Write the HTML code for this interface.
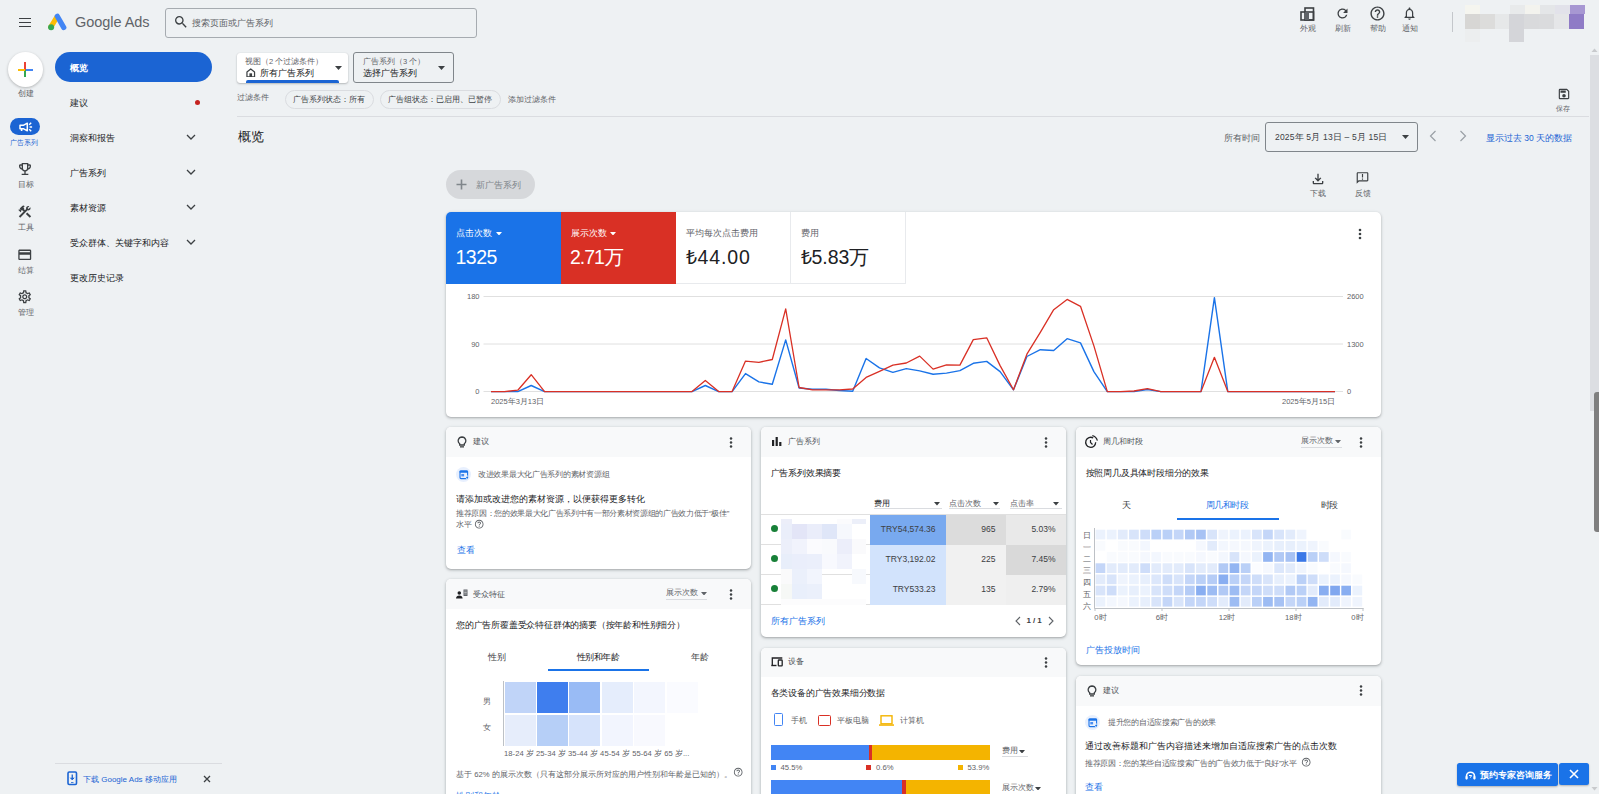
<!DOCTYPE html>
<html><head><meta charset="utf-8">
<style>
*{box-sizing:border-box;margin:0;padding:0}
html,body{width:1599px;height:794px;overflow:hidden}
body{background:#eef1f3;font-family:"Liberation Sans",sans-serif;color:#202124;position:relative}
.a{position:absolute;white-space:nowrap}
.g{color:#5f6368}
svg{display:block}
.card{background:#fff;border-radius:5px;box-shadow:0 1px 2px rgba(60,64,67,.3),0 1px 3px 1px rgba(60,64,67,.12);overflow:hidden}
.hdr{background:#f8f9fa}
.ht{font-size:7.5px;line-height:9px;color:#4d5156}
.tt{font-size:8.9px;line-height:11px;color:#202124;font-weight:500}
.tt2{font-size:9px;letter-spacing:-0.2px;line-height:11px;color:#202124;font-weight:500}
.tab{font-size:8.5px;line-height:10px;color:#3c4043;letter-spacing:-0.4px}
.lk{font-size:8.5px;line-height:10px;color:#1a73e8;font-weight:500}
.num{font-size:8.5px;line-height:11px;color:#3c4043}

</style></head><body>

<!-- ===== HEADER ===== -->
<div class="a" style="left:19px;top:18px;width:12px;height:9px">
 <div style="position:absolute;left:0;top:0;width:12px;height:1.4px;background:#3c4043"></div>
 <div style="position:absolute;left:0;top:3.8px;width:12px;height:1.4px;background:#3c4043"></div>
 <div style="position:absolute;left:0;top:7.6px;width:12px;height:1.4px;background:#3c4043"></div>
</div>
<svg class="a" style="left:47px;top:13px" width="21" height="18" viewBox="0 0 21 18">
 <path d="M3.8 14.2 L9.3 5" stroke="#fbbc04" stroke-width="5.2" stroke-linecap="round"/>
 <path d="M10.3 3.3 L16.8 14.6" stroke="#4285f4" stroke-width="5.2" stroke-linecap="round"/>
 <circle cx="4.1" cy="14.3" r="3" fill="#34a853"/>
</svg>
<div class="a" style="left:75px;top:13.5px;font-size:14.5px;line-height:17px;color:#5f6368;letter-spacing:-0.05px">Google Ads</div>

<div class="a" style="left:165px;top:7.5px;width:312px;height:30px;border:1px solid #a6abb0;border-radius:3px"></div>
<svg class="a" style="left:172.5px;top:13.5px" width="16" height="16" viewBox="0 0 24 24"><path fill="#3c4043" d="M15.5 14h-.79l-.28-.27A6.471 6.471 0 0 0 16 9.5 6.5 6.5 0 1 0 9.5 16c1.61 0 3.09-.59 4.23-1.57l.27.28v.79l5 4.99L20.49 19l-4.99-5zm-6 0C7.01 14 5 11.99 5 9.5S7.01 5 9.5 5 14 7.01 14 9.5 11.99 14 9.5 14z"/></svg>
<div class="a g" style="left:191.5px;top:18px;font-size:9px;line-height:11px">搜索页面或广告系列</div>

<!-- top right icons -->
<svg class="a" style="left:1300px;top:7px" width="15" height="14" viewBox="0 0 15 14"><rect x="1" y="5" width="12.5" height="8" fill="none" stroke="#3c4043" stroke-width="1.6"/><rect x="5" y="1" width="8.5" height="12" fill="none" stroke="#3c4043" stroke-width="1.6"/><rect x="5" y="5" width="4" height="8" fill="#5f6368"/></svg>
<div class="a g" style="left:1300px;top:24px;font-size:7.5px;line-height:9px">外观</div>
<svg class="a" style="left:1335px;top:6px" width="15" height="15" viewBox="0 0 24 24"><path fill="#3c4043" d="M17.65 6.35A7.958 7.958 0 0 0 12 4c-4.42 0-7.99 3.58-7.99 8s3.57 8 7.99 8c3.73 0 6.84-2.55 7.73-6h-2.08A5.99 5.99 0 0 1 12 18c-3.31 0-6-2.69-6-6s2.69-6 6-6c1.66 0 3.14.69 4.22 1.78L13 11h7V4l-2.35 2.35z"/></svg>
<div class="a g" style="left:1335px;top:24px;font-size:7.5px;line-height:9px">刷新</div>
<svg class="a" style="left:1369px;top:5px" width="17" height="17" viewBox="0 0 24 24"><path fill="#3c4043" d="M11 18h2v-2h-2v2zm1-16C6.48 2 2 6.48 2 12s4.48 10 10 10 10-4.48 10-10S17.52 2 12 2zm0 18c-4.41 0-8-3.59-8-8s3.59-8 8-8 8 3.59 8 8-3.59 8-8 8zm0-14c-2.21 0-4 1.79-4 4h2c0-1.1.9-2 2-2s2 .9 2 2c0 2-3 1.75-3 5h2c0-2.25 3-2.5 3-5 0-2.21-1.79-4-4-4z"/></svg>
<div class="a g" style="left:1370px;top:24px;font-size:7.5px;line-height:9px">帮助</div>
<svg class="a" style="left:1402px;top:6px" width="15" height="15" viewBox="0 0 24 24"><path fill="#3c4043" d="M12 22c1.1 0 2-.9 2-2h-4c0 1.1.89 2 2 2zm6-6v-5c0-3.07-1.64-5.64-4.5-6.32V4c0-.83-.67-1.5-1.5-1.5s-1.5.67-1.5 1.5v.68C7.63 5.36 6 7.92 6 11v5l-2 2v1h16v-1l-2-2zm-2 1H8v-6c0-2.48 1.51-4.5 4-4.5s4 2.02 4 4.5v6z"/></svg>
<div class="a g" style="left:1402px;top:24px;font-size:7.5px;line-height:9px">通知</div>
<div class="a" style="left:1452px;top:12px;width:1px;height:20px;background:#c4c7cb"></div>

<!-- pixelated account -->
<div class="a" style="left:1464.8px;top:5px;width:128px;height:37px">
 <div style="position:absolute;left:0;top:0;width:15px;height:9px;background:#f5f5ef"></div>
 <div style="position:absolute;left:45px;top:0;width:15px;height:9px;background:#e8eaeb"></div>
 <div style="position:absolute;left:60px;top:0;width:15px;height:9px;background:#f3f3ee"></div>
 <div style="position:absolute;left:75px;top:0;width:15px;height:9px;background:#e4e6e8"></div>
 <div style="position:absolute;left:90px;top:0;width:15px;height:9px;background:#e2e2ea"></div>
 <div style="position:absolute;left:105px;top:0;width:15px;height:9px;background:#a797d2"></div>
 <div style="position:absolute;left:0;top:9px;width:15px;height:15px;background:#d7d6d4"></div>
 <div style="position:absolute;left:14.9px;top:9px;width:14.9px;height:15px;background:#dcdcdb"></div>
 <div style="position:absolute;left:29.8px;top:9px;width:14.9px;height:15px;background:#e6e8e9"></div>
 <div style="position:absolute;left:44.7px;top:9px;width:14.9px;height:15px;background:#d4d5d9"></div>
 <div style="position:absolute;left:59.6px;top:9px;width:14.9px;height:15px;background:#d9dadc"></div>
 <div style="position:absolute;left:74.5px;top:9px;width:14.9px;height:15px;background:#dadbdd"></div>
 <div style="position:absolute;left:89.4px;top:9px;width:14.9px;height:15px;background:#e5e6e8"></div>
 <div style="position:absolute;left:104.3px;top:9px;width:14.9px;height:15px;background:#8f7bc6"></div>
 <div style="position:absolute;left:0;top:24px;width:15px;height:13px;background:#eceeef"></div>
 <div style="position:absolute;left:44.7px;top:24px;width:14.9px;height:13px;background:#d4d5d9"></div>
</div>

<!-- scrollbar -->
<svg class="a" style="left:1590px;top:47px" width="9" height="6" viewBox="0 0 9 6"><path d="M1.5 5h6L4.5 1.5z" fill="#c8cacd"/></svg>
<svg class="a" style="left:1590px;top:786px" width="9" height="6" viewBox="0 0 9 6"><path d="M1.5 1h6L4.5 4.5z" fill="#c8cacd"/></svg>
<div class="a" style="left:1590px;top:55px;width:9px;height:356px;background:#dcdee2"></div>
<div class="a" style="left:1594px;top:392px;width:5px;height:140px;background:#7f7f7f;border-radius:3px 0 0 3px"></div>

<!-- ===== LEFT RAIL ===== -->
<div class="a" style="left:8px;top:52px;width:35px;height:35px;border-radius:50%;background:#fff;box-shadow:0 1px 3px rgba(0,0,0,.25)"></div>
<div class="a" style="left:24px;top:62px;width:2.4px;height:7.5px;background:#ea4335"></div>
<div class="a" style="left:24px;top:69.5px;width:2.4px;height:7.5px;background:#34a853"></div>
<div class="a" style="left:18px;top:68.5px;width:6.5px;height:2.4px;background:#fbbc04"></div>
<div class="a" style="left:25.5px;top:68.5px;width:7.5px;height:2.4px;background:#4285f4"></div>
<div class="a g" style="left:18px;top:89px;font-size:7.5px;line-height:9px">创建</div>

<div class="a" style="left:10px;top:118px;width:30px;height:17px;border-radius:9px;background:#1b64d3"></div>
<svg class="a" style="left:18.5px;top:121.8px" width="14" height="10" viewBox="0 0 14 10"><path d="M1 3.3h3.3L8.3 1.2v7.6L4.3 6.7H1z" fill="none" stroke="#fff" stroke-width="1.5" stroke-linejoin="round"/><path d="M2.6 6.7v2.3" stroke="#fff" stroke-width="1.6"/><path d="M10.2 2.7l2-2M10.6 5h2.5M10.2 7.3l2 2" stroke="#fff" stroke-width="1.4"/></svg>
<div class="a" style="left:9.5px;top:138px;font-size:7.3px;line-height:9px;color:#1b64d3">广告系列</div>

<svg class="a" style="left:17px;top:161px" width="16" height="16" viewBox="0 0 24 24"><path fill="#3c4043" d="M19 5h-2V3H7v2H5c-1.1 0-2 .9-2 2v1c0 2.55 1.92 4.63 4.39 4.94A5.01 5.01 0 0 0 11 15.9V19H7v2h10v-2h-4v-3.1a5.01 5.01 0 0 0 3.61-2.96C19.08 12.63 21 10.55 21 8V7c0-1.1-.9-2-2-2zM5 8V7h2v3.82C5.84 10.4 5 9.3 5 8zm7 6c-1.65 0-3-1.35-3-3V5h6v6c0 1.65-1.35 3-3 3zm7-6c0 1.3-.84 2.4-2 2.82V7h2v1z"/></svg>
<div class="a g" style="left:18px;top:180px;font-size:7.5px;line-height:9px">目标</div>

<svg class="a" style="left:17.2px;top:203.5px" width="15.5" height="15.5" viewBox="0 0 24 24"><path fill="#3c4043" d="M13.78 15.3l6 6 2.11-2.16-6-6zM17.5 10c1.93 0 3.5-1.57 3.5-3.5 0-.58-.16-1.12-.41-1.6l-2.7 2.7-1.49-1.49 2.7-2.7c-.48-.25-1.02-.41-1.6-.41C15.57 3 14 4.57 14 6.5c0 .41.08.8.21 1.16l-1.85 1.85-1.78-1.78.71-.71-1.41-1.41L12 3.49a3 3 0 0 0-4.24 0L4.22 7.03l1.41 1.41H2.81l-.71.71 3.54 3.54.71-.71V9.15l1.41 1.41.71-.71 1.78 1.78-7.41 7.41 2.12 2.12L16.34 9.79c.36.13.75.21 1.16.21z"/></svg>
<div class="a g" style="left:18px;top:223px;font-size:7.5px;line-height:9px">工具</div>

<svg class="a" style="left:17.2px;top:246.5px" width="15.5" height="15.5" viewBox="0 0 24 24"><path fill="#3c4043" d="M20 4H4c-1.11 0-1.99.89-1.99 2L2 18c0 1.11.89 2 2 2h16c1.11 0 2-.89 2-2V6c0-1.11-.89-2-2-2zm0 14H4v-6h16v6zm0-10H4V6h16v2z"/></svg>
<div class="a g" style="left:18px;top:266px;font-size:7.5px;line-height:9px">结算</div>

<svg class="a" style="left:17.2px;top:288.5px" width="15.5" height="15.5" viewBox="0 0 24 24"><path fill="#3c4043" d="M19.43 12.98c.04-.32.07-.64.07-.98 0-.34-.03-.66-.07-.98l2.11-1.65c.19-.15.24-.42.12-.64l-2-3.46a.5.5 0 0 0-.61-.22l-2.49 1c-.52-.4-1.08-.73-1.69-.98l-.38-2.65A.488.488 0 0 0 14 2h-4c-.25 0-.46.18-.49.42l-.38 2.65c-.61.25-1.17.59-1.69.98l-2.49-1a.566.566 0 0 0-.18-.03c-.17 0-.34.09-.43.25l-2 3.46c-.13.22-.07.49.12.64l2.11 1.65c-.04.32-.07.65-.07.98 0 .33.03.66.07.98l-2.11 1.65c-.19.15-.24.42-.12.64l2 3.46a.5.5 0 0 0 .61.22l2.49-1c.52.4 1.08.73 1.69.98l.38 2.65c.03.24.24.42.49.42h4c.25 0 .46-.18.49-.42l.38-2.65c.61-.25 1.17-.59 1.69-.98l2.49 1c.06.02.12.03.18.03.17 0 .34-.09.43-.25l2-3.46c.12-.22.07-.49-.12-.64l-2.11-1.65zM17.45 11.27c.04.31.05.52.05.73 0 .21-.02.43-.05.73l-.14 1.13.89.7 1.08.84-.7 1.21-1.27-.51-1.04-.42-.9.68c-.43.32-.84.56-1.25.73l-1.06.43-.16 1.13-.2 1.35h-1.4l-.19-1.35-.16-1.13-1.06-.43c-.43-.18-.83-.41-1.23-.71l-.91-.7-1.06.43-1.27.51-.7-1.21 1.08-.84.89-.7-.14-1.13c-.03-.31-.05-.54-.05-.74s.02-.43.05-.73l.14-1.13-.89-.7-1.08-.84.7-1.21 1.27.51 1.04.42.9-.68c.43-.32.84-.56 1.25-.73l1.06-.43.16-1.13.2-1.35h1.39l.19 1.35.16 1.13 1.06.43c.43.18.83.41 1.23.71l.91.7 1.06-.43 1.27-.51.7 1.21-1.07.85-.89.7.14 1.13zM12 8c-2.21 0-4 1.79-4 4s1.79 4 4 4 4-1.79 4-4-1.79-4-4-4zm0 6c-1.1 0-2-.9-2-2s.9-2 2-2 2 .9 2 2-.9 2-2 2z"/></svg>
<div class="a g" style="left:18px;top:308px;font-size:7.5px;line-height:9px">管理</div>

<!-- ===== NAV ===== -->
<div class="a" style="left:55px;top:52px;width:157px;height:30px;border-radius:15px;background:#1b64d3"></div>
<div class="a" style="left:70px;top:63px;font-size:9px;line-height:10px;color:#fff;font-weight:bold">概览</div>
<div class="a" style="left:70px;top:98px;font-size:9px;line-height:10px;color:#202124">建议</div>
<div class="a" style="left:195px;top:100px;width:5px;height:5px;border-radius:50%;background:#c5221f"></div>
<div class="a" style="left:70px;top:133px;font-size:9px;line-height:10px">洞察和报告</div>
<div class="a" style="left:70px;top:168px;font-size:9px;line-height:10px">广告系列</div>
<div class="a" style="left:70px;top:203px;font-size:9px;line-height:10px">素材资源</div>
<div class="a" style="left:70px;top:238px;font-size:9px;line-height:10px">受众群体、关键字和内容</div>
<div class="a" style="left:70px;top:273px;font-size:9px;line-height:10px">更改历史记录</div>
<svg class="a" style="left:186px;top:134px" width="10" height="6" viewBox="0 0 10 6"><path d="M1 1l4 4 4-4" fill="none" stroke="#3c4043" stroke-width="1.3"/></svg>
<svg class="a" style="left:186px;top:169px" width="10" height="6" viewBox="0 0 10 6"><path d="M1 1l4 4 4-4" fill="none" stroke="#3c4043" stroke-width="1.3"/></svg>
<svg class="a" style="left:186px;top:204px" width="10" height="6" viewBox="0 0 10 6"><path d="M1 1l4 4 4-4" fill="none" stroke="#3c4043" stroke-width="1.3"/></svg>
<svg class="a" style="left:186px;top:239px" width="10" height="6" viewBox="0 0 10 6"><path d="M1 1l4 4 4-4" fill="none" stroke="#3c4043" stroke-width="1.3"/></svg>

<!-- bottom-left download -->
<div class="a" style="left:55px;top:763px;width:167px;height:1px;background:#dadce0"></div>
<svg class="a" style="left:67px;top:771px" width="11" height="15" viewBox="0 0 11 15"><rect x="1" y="1" width="8.5" height="12.5" rx="1.2" fill="none" stroke="#1b64d3" stroke-width="1.6"/><path d="M5.25 3.5v5" stroke="#1b64d3" stroke-width="1.3"/><path d="M3.3 6.8l1.95 2 1.95-2" fill="#1b64d3" stroke="#1b64d3" stroke-width="1"/><rect x="4" y="11" width="2.5" height="0.8" fill="#1b64d3"/></svg>
<div class="a" style="left:83px;top:775px;font-size:8px;line-height:10px;color:#1b64d3">下载 Google Ads 移动应用</div>
<svg class="a" style="left:203px;top:775px" width="8" height="8" viewBox="0 0 8 8"><path d="M1 1l6 6M7 1L1 7" stroke="#3c4043" stroke-width="1.3"/></svg>


<!-- ===== FILTER BAR ===== -->
<div class="a" style="left:237px;top:52.5px;width:111px;height:30.5px;background:#fff;border-radius:3px;box-shadow:0 1px 2px rgba(60,64,67,.3),0 0 1px rgba(60,64,67,.2)"></div>
<div class="a g" style="left:245px;top:56.5px;font-size:7.5px;line-height:9px">视图（2 个过滤条件）</div>
<svg class="a" style="left:246.3px;top:67.8px" width="9.5" height="9.5" viewBox="0 0 10 10"><path d="M1 9.3V4.2L5 1l4 3.2v5.1z" fill="none" stroke="#3c4043" stroke-width="1.3" stroke-linejoin="round"/><rect x="3.6" y="5.6" width="2.8" height="3.8" fill="#3c4043"/></svg>
<div class="a" style="left:259.5px;top:67.5px;font-size:9px;line-height:10px;color:#202124;font-weight:500">所有广告系列</div>
<svg class="a" style="left:335px;top:66px" width="7" height="4" viewBox="0 0 7 4"><path d="M0 0h7L3.5 4z" fill="#3c4043"/></svg>
<div class="a" style="left:246px;top:80px;width:93px;height:3px;background:#1b64d3;border-radius:2px 2px 0 0"></div>

<div class="a" style="left:353px;top:52px;width:101px;height:31px;border:1px solid #80868b;border-radius:3px"></div>
<div class="a g" style="left:363px;top:56.5px;font-size:7.5px;line-height:9px">广告系列（3 个）</div>
<div class="a" style="left:363px;top:67.5px;font-size:9px;line-height:10px;color:#202124;font-weight:500">选择广告系列</div>
<svg class="a" style="left:438px;top:66px" width="7" height="4" viewBox="0 0 7 4"><path d="M0 0h7L3.5 4z" fill="#3c4043"/></svg>

<div class="a g" style="left:237px;top:92.5px;font-size:8px;line-height:9px">过滤条件</div>
<div class="a" style="left:285px;top:89.5px;width:89px;height:19.5px;border:1px solid #dadce0;border-radius:10px"></div>
<div class="a" style="left:292.5px;top:94.5px;font-size:8px;line-height:9px;color:#3c4043;font-weight:500">广告系列状态：所有</div>
<div class="a" style="left:379.5px;top:89.5px;width:121px;height:19.5px;border:1px solid #dadce0;border-radius:10px"></div>
<div class="a" style="left:387.5px;top:94.5px;font-size:8px;line-height:9px;color:#3c4043;font-weight:500">广告组状态：已启用、已暂停</div>
<div class="a g" style="left:508px;top:94.5px;font-size:8px;line-height:9px">添加过滤条件</div>

<svg class="a" style="left:1557px;top:86.5px" width="14" height="14" viewBox="0 0 24 24"><path fill="#3c4043" d="M17 3H5a2 2 0 0 0-2 2v14a2 2 0 0 0 2 2h14c1.1 0 2-.9 2-2V7l-4-4zm2 16H5V5h11.17L19 7.83V19zm-7-7c-1.66 0-3 1.34-3 3s1.34 3 3 3 3-1.34 3-3-1.34-3-3-3zM6 6h9v4H6z"/></svg>
<div class="a g" style="left:1556px;top:104px;font-size:7px;line-height:9px">保存</div>
<div class="a" style="left:237px;top:116px;width:1352px;height:1px;background:#dadce0"></div>

<!-- heading + date -->
<div class="a" style="left:237.5px;top:129px;font-size:13px;line-height:16px;color:#202124">概览</div>
<div class="a g" style="left:1223.5px;top:133.3px;font-size:8.5px;line-height:10px">所有时间</div>
<div class="a" style="left:1264.5px;top:122px;width:153.5px;height:29.5px;border:1px solid #80868b;border-radius:3px"></div>
<div class="a" style="left:1275px;top:131.5px;font-size:8.5px;line-height:10px;color:#3c4043;letter-spacing:0.18px">2025年 5月 13日 – 5月 15日</div>
<svg class="a" style="left:1401.5px;top:135px" width="7" height="4" viewBox="0 0 7 4"><path d="M0 0h7L3.5 4z" fill="#3c4043"/></svg>
<svg class="a" style="left:1429px;top:130px" width="8" height="12" viewBox="0 0 8 12"><path d="M6.5 1L1.5 6l5 5" fill="none" stroke="#9aa0a6" stroke-width="1.2"/></svg>
<svg class="a" style="left:1459px;top:130px" width="8" height="12" viewBox="0 0 8 12"><path d="M1.5 1l5 5-5 5" fill="none" stroke="#9aa0a6" stroke-width="1.2"/></svg>
<div class="a" style="left:1486px;top:132.5px;font-size:8.5px;line-height:10px;color:#1b64d3">显示过去 30 天的数据</div>

<!-- new campaign -->
<div class="a" style="left:446px;top:169.5px;width:89px;height:29.5px;border-radius:15px;background:#d6d8db"></div>
<svg class="a" style="left:455.5px;top:179px" width="11" height="11" viewBox="0 0 11 11"><path d="M5.5 0.5v10M0.5 5.5h10" stroke="#80868b" stroke-width="1.6"/></svg>
<div class="a" style="left:475.8px;top:179.5px;font-size:9px;line-height:10px;color:#80868b;font-weight:500">新广告系列</div>

<svg class="a" style="left:1309.5px;top:170.5px" width="16" height="16" viewBox="0 0 24 24"><path fill="#3c4043" d="M18 15v3H6v-3H4v3c0 1.1.9 2 2 2h12c1.1 0 2-.9 2-2v-3h-2zm-1-4l-1.41-1.41L13 12.17V4h-2v8.17L8.41 9.59 7 11l5 5 5-5z"/></svg>
<div class="a g" style="left:1309.7px;top:189px;font-size:7.5px;line-height:9px">下载</div>
<svg class="a" style="left:1355px;top:171px" width="15" height="14" viewBox="0 0 24 24"><path fill="#3c4043" d="M20 2H4c-1.1 0-1.99.9-1.99 2L2 22l4-4h14c1.1 0 2-.9 2-2V4c0-1.1-.9-2-2-2zm0 14H5.17L4 17.17V4h16v12zM11 5h2v6h-2zm0 8h2v2h-2z"/></svg>
<div class="a g" style="left:1355px;top:189px;font-size:7.5px;line-height:9px">反馈</div>

<!-- ===== CHART CARD ===== -->
<div class="a" style="left:446px;top:211.5px;width:935px;height:205px;background:#fff;border-radius:5px;box-shadow:0 1px 2px rgba(60,64,67,.3),0 1px 3px 1px rgba(60,64,67,.1);overflow:hidden">
 <div style="position:absolute;left:0;top:0;width:115px;height:72.5px;background:#1a73e8"></div>
 <div style="position:absolute;left:115px;top:0;width:115px;height:72.5px;background:#d93025"></div>
 <div style="position:absolute;left:230px;top:0;width:114.5px;height:72.5px;border-right:1px solid #e8eaed;border-bottom:1px solid #e8eaed"></div>
 <div style="position:absolute;left:344.5px;top:0;width:115px;height:72.5px;border-right:1px solid #e8eaed;border-bottom:1px solid #e8eaed"></div>
</div>
<div class="a" style="left:456px;top:227.5px;font-size:8.5px;line-height:10px;color:#fff;font-weight:500">点击次数</div>
<svg class="a" style="left:495.5px;top:231.5px" width="6" height="3.5" viewBox="0 0 6 3.5"><path d="M0 0h6L3 3.5z" fill="#fff"/></svg>
<div class="a" style="left:455.5px;top:245.5px;font-size:19.5px;line-height:22px;color:#fff;letter-spacing:-0.5px">1325</div>
<div class="a" style="left:570.5px;top:227.5px;font-size:8.5px;line-height:10px;color:#fff;font-weight:500">展示次数</div>
<svg class="a" style="left:610px;top:231.5px" width="6" height="3.5" viewBox="0 0 6 3.5"><path d="M0 0h6L3 3.5z" fill="#fff"/></svg>
<div class="a" style="left:570px;top:245.5px;font-size:19.5px;line-height:22px;color:#fff;letter-spacing:-1px">2.71万</div>
<div class="a g" style="left:685.5px;top:227.5px;font-size:8.5px;line-height:10px">平均每次点击费用</div>
<div class="a" style="left:685.5px;top:245.5px;font-size:19.5px;line-height:22px;color:#202124;letter-spacing:0.9px">₺44.00</div>
<div class="a g" style="left:800.5px;top:227.5px;font-size:8.5px;line-height:10px">费用</div>
<div class="a" style="left:800.5px;top:245.5px;font-size:19.5px;line-height:22px;color:#202124">₺5.83万</div>
<svg class="a" style="left:1357.5px;top:228px" width="4" height="12" viewBox="0 0 4 12"><circle cx="2" cy="2" r="1.3" fill="#3c4043"/><circle cx="2" cy="6" r="1.3" fill="#3c4043"/><circle cx="2" cy="10" r="1.3" fill="#3c4043"/></svg>

<svg class="a" style="left:0;top:0" width="1599" height="794" viewBox="0 0 1599 794">
 <g stroke="#e0e0e0" stroke-width="1">
  <line x1="483.5" y1="296.5" x2="1343" y2="296.5"/>
  <line x1="483.5" y1="344" x2="1343" y2="344"/>
  <line x1="483.5" y1="391.5" x2="1343" y2="391.5"/>
 </g>
 <polyline points="491.0,391.6 504.4,391.6 517.8,391.6 531.2,385.5 544.6,391.6 558.0,391.6 571.4,391.6 584.8,391.6 598.2,391.6 611.6,391.6 625.0,391.6 638.4,391.6 651.8,391.6 665.2,391.6 678.6,391.6 692.0,391.6 705.3,385.5 718.7,391.6 732.1,391.6 745.5,373.6 758.9,381.9 772.3,384.2 785.7,339.9 799.1,388.0 812.5,389.3 825.9,389.3 839.3,390.5 852.7,391.3 866.1,358.5 879.5,367.9 892.9,372.4 906.3,368.6 919.7,370.9 933.1,374.2 946.5,373.1 959.9,370.6 973.3,363.3 986.7,361.4 1000.1,371.6 1013.5,389.8 1026.9,356.5 1040.3,349.7 1053.7,350.5 1067.1,338.7 1080.5,342.9 1093.9,371.6 1107.3,391.6 1120.7,391.6 1134.0,391.6 1147.4,389.5 1160.8,391.6 1174.2,391.6 1187.6,391.6 1201.0,391.6 1214.4,297.6 1227.8,391.6 1241.2,391.6 1254.6,391.6 1268.0,391.6 1281.4,391.6 1294.8,391.6 1308.2,391.6 1321.6,391.6 1335.0,391.6" fill="none" stroke="#1a73e8" stroke-width="1.4" stroke-linejoin="round"/>
 <polyline points="491.0,391.6 504.4,391.6 517.8,390.2 531.2,374.7 544.6,391.6 558.0,391.6 571.4,391.6 584.8,391.6 598.2,391.6 611.6,391.6 625.0,391.6 638.4,391.6 651.8,391.6 665.2,391.6 678.6,391.6 692.0,391.6 705.3,380.4 718.7,391.6 732.1,391.6 745.5,361.1 758.9,362.3 772.3,359.5 785.7,308.9 799.1,387.5 812.5,389.8 825.9,389.8 839.3,389.8 852.7,389.0 866.1,377.4 879.5,371.3 892.9,365.1 906.3,363.0 919.7,356.1 933.1,369.1 946.5,364.8 959.9,365.1 973.3,339.6 986.7,337.8 1000.1,365.6 1013.5,389.8 1026.9,354.2 1040.3,332.3 1053.7,309.7 1067.1,299.4 1080.5,306.3 1093.9,345.9 1107.3,391.6 1120.7,391.6 1134.0,391.0 1147.4,388.6 1160.8,391.6 1174.2,391.6 1187.6,391.6 1201.0,391.6 1214.4,357.3 1227.8,391.6 1241.2,391.6 1254.6,391.6 1268.0,391.6 1281.4,391.6 1294.8,391.6 1308.2,391.6 1321.6,391.6 1335.0,391.6" fill="none" stroke="#d93025" stroke-width="1.3" stroke-linejoin="round"/>
</svg>
<div class="a g" style="left:466px;top:292px;font-size:7.5px;line-height:9px;width:13.5px;text-align:right">180</div>
<div class="a g" style="left:466px;top:339.5px;font-size:7.5px;line-height:9px;width:13.5px;text-align:right">90</div>
<div class="a g" style="left:466px;top:387px;font-size:7.5px;line-height:9px;width:13.5px;text-align:right">0</div>
<div class="a g" style="left:1347px;top:292px;font-size:7.5px;line-height:9px">2600</div>
<div class="a g" style="left:1347px;top:339.5px;font-size:7.5px;line-height:9px">1300</div>
<div class="a g" style="left:1347px;top:387px;font-size:7.5px;line-height:9px">0</div>
<div class="a g" style="left:491px;top:397px;font-size:7.5px;line-height:9px">2025年3月13日</div>
<div class="a g" style="left:1282px;top:397px;font-size:7.5px;line-height:9px">2025年5月15日</div>

<!--CARDS-->
<div class="a card" style="left:446px;top:427px;width:305px;height:142px"><div class="hdr" style="height:29.5px"></div></div>
<svg class="a" style="left:457px;top:436px" width="10" height="12" viewBox="0 0 10 12"><path d="M5 1a3.8 3.8 0 0 0-2.3 6.8V9h4.6V7.8A3.8 3.8 0 0 0 5 1z" fill="none" stroke="#3c4043" stroke-width="1.3"/><rect x="3" y="10.2" width="4" height="1.3" fill="#3c4043"/></svg>
<div class="a ht" style="left:473px;top:437.3px">建议</div>
<svg class="a" style="left:728.5px;top:436.5px" width="4" height="11" viewBox="0 0 4 11"><circle cx="2" cy="1.6" r="1.25" fill="#3c4043"/><circle cx="2" cy="5.5" r="1.25" fill="#3c4043"/><circle cx="2" cy="9.4" r="1.25" fill="#3c4043"/></svg>
<svg class="a" style="left:455.5px;top:466.5px" width="15" height="15" viewBox="0 0 15 15"><circle cx="7.5" cy="7.5" r="7.5" fill="#e8f0fe"/><rect x="4" y="4" width="7.6" height="7.6" rx="1" fill="none" stroke="#1a73e8" stroke-width="1.1"/><rect x="3.5" y="3.5" width="8.6" height="2.2" rx="0.8" fill="#1a73e8"/><rect x="5.3" y="7" width="2.8" height="2.4" fill="#4a8ef0"/><path d="M11.2 8.6L12.6 10.6 11.2 12.6 9.8 10.6z" fill="#1a73e8" stroke="#fff" stroke-width="0.7"/></svg>
<div class="a g" style="left:478px;top:470px;font-size:8px;letter-spacing:-0.28px;line-height:10px">改进效果最大化广告系列的素材资源组</div>
<div class="a tt" style="left:456px;top:493.5px">请添加或改进您的素材资源，以便获得更多转化</div>
<div class="a g" style="left:456px;top:509px;font-size:8px;letter-spacing:-0.33px;line-height:10.5px">推荐原因：您的效果最大化广告系列中有一部分素材资源组的广告效力低于“极佳”<br>水平</div>
<svg class="a" style="left:473.8px;top:518.8px" width="10.4" height="10.4" viewBox="0 0 24 24"><path fill="#5f6368" d="M11 18h2v-2h-2v2zm1-16C6.48 2 2 6.48 2 12s4.48 10 10 10 10-4.48 10-10S17.52 2 12 2zm0 18c-4.41 0-8-3.59-8-8s3.59-8 8-8 8 3.59 8 8-3.59 8-8 8zm0-14c-2.21 0-4 1.79-4 4h2c0-1.1.9-2 2-2s2 .9 2 2c0 2-3 1.75-3 5h2c0-2.25 3-2.5 3-5 0-2.21-1.79-4-4-4z"/></svg>
<div class="a lk" style="left:456.5px;top:545px">查看</div>
<div class="a card" style="left:446px;top:579px;width:305px;height:230px"><div class="hdr" style="height:29.5px"></div></div>
<svg class="a" style="left:456px;top:589px" width="12" height="10" viewBox="0 0 12 10"><circle cx="3.3" cy="4" r="1.8" fill="#202124"/><path d="M0 9.5c0-2 1.5-3 3.3-3s3.3 1 3.3 3z" fill="#202124"/><rect x="7.5" y="0.5" width="4" height="6.5" fill="#5f6368"/><path d="M8.2 2h2.6M8.2 3.5h2.6M8.2 5h2.6" stroke="#fff" stroke-width="0.5"/></svg>
<div class="a ht" style="left:473px;top:589.5px">受众特征</div>
<div class="a g" style="left:666px;top:588px;font-size:7.5px;line-height:9px">展示次数</div><svg class="a" style="left:700.5px;top:591.5px" width="6" height="3.5" viewBox="0 0 6 3.5"><path d="M0 0h6L3 3.5z" fill="#5f6368"/></svg>
<div class="a" style="left:666px;top:598.5px;width:41px;height:1px;background:#dadce0"></div>
<svg class="a" style="left:728.5px;top:588.5px" width="4" height="11" viewBox="0 0 4 11"><circle cx="2" cy="1.6" r="1.25" fill="#3c4043"/><circle cx="2" cy="5.5" r="1.25" fill="#3c4043"/><circle cx="2" cy="9.4" r="1.25" fill="#3c4043"/></svg>
<div class="a tt2" style="left:456px;top:619.5px">您的广告所覆盖受众特征群体的摘要（按年龄和性别细分）</div>
<div class="a tab" style="left:488px;top:652px">性别</div>
<div class="a tab" style="left:576.5px;top:652px;color:#202124">性别和年龄</div>
<div class="a tab" style="left:691px;top:652px">年龄</div>
<div class="a" style="left:547.5px;top:669px;width:101px;height:2px;background:#1a73e8"></div>
<div class="a" style="left:502.5px;top:681px;width:1px;height:65px;background:#bdc1c6"></div>
<div class="a" style="left:504.5px;top:682px;width:31px;height:31px;background:#c0d4f8"></div>
<div class="a" style="left:504.5px;top:715px;width:31px;height:31px;background:#e6edfb"></div>
<div class="a" style="left:536.9px;top:682px;width:31px;height:31px;background:#3f7eee"></div>
<div class="a" style="left:536.9px;top:715px;width:31px;height:31px;background:#b6cff7"></div>
<div class="a" style="left:569.3px;top:682px;width:31px;height:31px;background:#99bbf5"></div>
<div class="a" style="left:569.3px;top:715px;width:31px;height:31px;background:#d6e3fb"></div>
<div class="a" style="left:601.7px;top:682px;width:31px;height:31px;background:#e5edfc"></div>
<div class="a" style="left:601.7px;top:715px;width:31px;height:31px;background:#f2f5fe"></div>
<div class="a" style="left:634.1px;top:682px;width:31px;height:31px;background:#f3f6fe"></div>
<div class="a" style="left:634.1px;top:715px;width:31px;height:31px;background:#f8f9fe"></div>
<div class="a" style="left:666.5px;top:682px;width:31px;height:31px;background:#fafbff"></div>
<div class="a g" style="left:482.5px;top:697px;font-size:8px;line-height:10px">男</div>
<div class="a g" style="left:482.5px;top:723px;font-size:8px;line-height:10px">女</div>
<div class="a g" style="left:504px;top:749px;font-size:7.6px;line-height:10px;letter-spacing:0.05px">18-24 岁 25-34 岁 35-44 岁 45-54 岁 55-64 岁 65 岁...</div>
<div class="a g" style="left:456px;top:769.5px;font-size:7.7px;line-height:10px">基于 62% 的展示次数（只有这部分展示所对应的用户性别和年龄是已知的）。</div>
<svg class="a" style="left:733.3px;top:767.3px" width="10.4" height="10.4" viewBox="0 0 24 24"><path fill="#5f6368" d="M11 18h2v-2h-2v2zm1-16C6.48 2 2 6.48 2 12s4.48 10 10 10 10-4.48 10-10S17.52 2 12 2zm0 18c-4.41 0-8-3.59-8-8s3.59-8 8-8 8 3.59 8 8-3.59 8-8 8zm0-14c-2.21 0-4 1.79-4 4h2c0-1.1.9-2 2-2s2 .9 2 2c0 2-3 1.75-3 5h2c0-2.25 3-2.5 3-5 0-2.21-1.79-4-4-4z"/></svg>
<div class="a lk" style="left:456px;top:791px">性别和年龄</div>
<div class="a card" style="left:761px;top:427px;width:305px;height:210px"><div class="hdr" style="height:29.5px"></div></div>
<svg class="a" style="left:772px;top:437px" width="10" height="9" viewBox="0 0 10 9"><rect x="0" y="3" width="2.2" height="6" fill="#202124"/><rect x="3.6" y="0" width="2.2" height="9" fill="#202124"/><rect x="7.2" y="5" width="2.2" height="4" fill="#202124"/></svg>
<div class="a ht" style="left:788px;top:436.5px">广告系列</div>
<svg class="a" style="left:1043.5px;top:436.5px" width="4" height="11" viewBox="0 0 4 11"><circle cx="2" cy="1.6" r="1.25" fill="#3c4043"/><circle cx="2" cy="5.5" r="1.25" fill="#3c4043"/><circle cx="2" cy="9.4" r="1.25" fill="#3c4043"/></svg>
<div class="a tt2" style="left:770.5px;top:468px">广告系列效果摘要</div>
<div class="a" style="left:874px;top:498.5px;font-size:7.5px;line-height:9px;font-weight:500;color:#202124">费用</div><svg class="a" style="left:933.5px;top:502px" width="6" height="3.5" viewBox="0 0 6 3.5"><path d="M0 0h6L3 3.5z" fill="#3c4043"/></svg>
<div class="a" style="left:874px;top:508px;width:68px;height:1px;background:#dadce0"></div>
<div class="a g" style="left:949px;top:498.5px;font-size:7.5px;line-height:9px">点击次数</div><svg class="a" style="left:993px;top:502px" width="6" height="3.5" viewBox="0 0 6 3.5"><path d="M0 0h6L3 3.5z" fill="#3c4043"/></svg>
<div class="a" style="left:949px;top:508px;width:51px;height:1px;background:#dadce0"></div>
<div class="a g" style="left:1009.5px;top:498.5px;font-size:7.5px;line-height:9px">点击率</div><svg class="a" style="left:1052.5px;top:502px" width="6" height="3.5" viewBox="0 0 6 3.5"><path d="M0 0h6L3 3.5z" fill="#3c4043"/></svg>
<div class="a" style="left:1009.5px;top:508px;width:52.5px;height:1px;background:#dadce0"></div>
<div class="a" style="left:761px;top:514px;width:305px;height:1px;background:#e0e0e0"></div>
<div class="a" style="left:761px;top:544px;width:305px;height:1px;background:#e0e0e0"></div>
<div class="a" style="left:761px;top:574px;width:305px;height:1px;background:#e0e0e0"></div>
<div class="a" style="left:761px;top:604px;width:305px;height:1px;background:#e0e0e0"></div>
<div class="a" style="left:870px;top:514.5px;width:75.5px;height:30px;background:#78a9ef"></div>
<div class="a" style="left:945.5px;top:514.5px;width:60px;height:30px;background:#dcdcdc"></div>
<div class="a" style="left:1005.5px;top:514.5px;width:60.5px;height:30px;background:#e9e9e9"></div>
<div class="a num" style="left:870px;top:523.5px;width:65.5px;text-align:right">TRY54,574.36</div>
<div class="a num" style="left:945.5px;top:523.5px;width:50px;text-align:right">965</div>
<div class="a num" style="left:1005.5px;top:523.5px;width:50px;text-align:right">5.03%</div>
<div class="a" style="left:771px;top:525.0px;width:7px;height:7px;border-radius:50%;background:#188038"></div>
<div class="a" style="left:870px;top:544.5px;width:75.5px;height:30px;background:#d2e3fc"></div>
<div class="a" style="left:945.5px;top:544.5px;width:60px;height:30px;background:#f1f1f1"></div>
<div class="a" style="left:1005.5px;top:544.5px;width:60.5px;height:30px;background:#d9d9d9"></div>
<div class="a num" style="left:870px;top:553.5px;width:65.5px;text-align:right">TRY3,192.02</div>
<div class="a num" style="left:945.5px;top:553.5px;width:50px;text-align:right">225</div>
<div class="a num" style="left:1005.5px;top:553.5px;width:50px;text-align:right">7.45%</div>
<div class="a" style="left:771px;top:555.0px;width:7px;height:7px;border-radius:50%;background:#188038"></div>
<div class="a" style="left:870px;top:574.5px;width:75.5px;height:30px;background:#d2e3fc"></div>
<div class="a" style="left:945.5px;top:574.5px;width:60px;height:30px;background:#f1f1f1"></div>
<div class="a" style="left:1005.5px;top:574.5px;width:60.5px;height:30px;background:#efefef"></div>
<div class="a num" style="left:870px;top:583.5px;width:65.5px;text-align:right">TRY533.23</div>
<div class="a num" style="left:945.5px;top:583.5px;width:50px;text-align:right">135</div>
<div class="a num" style="left:1005.5px;top:583.5px;width:50px;text-align:right">2.79%</div>
<div class="a" style="left:771px;top:585.0px;width:7px;height:7px;border-radius:50%;background:#188038"></div>
<div class="a" style="left:780.7px;top:518.6px;width:11px;height:5.5px;background:#eceef9"></div>
<div class="a" style="left:837px;top:518.6px;width:15px;height:5.5px;background:#fbfbfd"></div>
<div class="a" style="left:852px;top:518.6px;width:14.3px;height:5.5px;background:#eceff9"></div>
<div class="a" style="left:780.7px;top:524px;width:11px;height:15px;background:#eaeefa"></div>
<div class="a" style="left:791.7px;top:524px;width:15px;height:15px;background:#e3e5f7"></div>
<div class="a" style="left:806.7px;top:524px;width:15px;height:15px;background:#eaedfa"></div>
<div class="a" style="left:821.7px;top:524px;width:15px;height:15px;background:#dfe6f8"></div>
<div class="a" style="left:836.7px;top:524px;width:15px;height:15px;background:#f6f8fd"></div>
<div class="a" style="left:780.7px;top:539px;width:11px;height:15px;background:#eceffa"></div>
<div class="a" style="left:791.7px;top:539px;width:15px;height:15px;background:#f1f3fc"></div>
<div class="a" style="left:806.7px;top:539px;width:15px;height:15px;background:#fbfbfe"></div>
<div class="a" style="left:821.7px;top:539px;width:15px;height:15px;background:#f9fafd"></div>
<div class="a" style="left:836.7px;top:539px;width:15px;height:15px;background:#eceefa"></div>
<div class="a" style="left:851.7px;top:539px;width:14.6px;height:15px;background:#fafafc"></div>
<div class="a" style="left:780.7px;top:554px;width:11px;height:15px;background:#e8eefa"></div>
<div class="a" style="left:791.7px;top:554px;width:15px;height:15px;background:#eaeefb"></div>
<div class="a" style="left:806.7px;top:554px;width:15px;height:15px;background:#ebeffb"></div>
<div class="a" style="left:821.7px;top:554px;width:15px;height:15px;background:#f8f9fe"></div>
<div class="a" style="left:836.7px;top:554px;width:15px;height:15px;background:#f1f3fc"></div>
<div class="a" style="left:780.7px;top:569px;width:11px;height:15px;background:#fafafb"></div>
<div class="a" style="left:791.7px;top:569px;width:15px;height:15px;background:#ebf0fb"></div>
<div class="a" style="left:806.7px;top:569px;width:15px;height:15px;background:#f2f5fd"></div>
<div class="a" style="left:851.7px;top:569px;width:14.6px;height:15px;background:#f7f9fd"></div>
<div class="a" style="left:780.7px;top:584px;width:11px;height:15px;background:#f6f8f6"></div>
<div class="a" style="left:791.7px;top:584px;width:15px;height:15px;background:#e9effb"></div>
<div class="a" style="left:806.7px;top:584px;width:15px;height:15px;background:#ebf0fb"></div>
<div class="a" style="left:780.7px;top:599px;width:85.6px;height:6px;background:#fcfcfd"></div>
<div class="a lk" style="left:770.5px;top:615.5px;font-weight:normal">所有广告系列</div>
<svg class="a" style="left:1015px;top:616px" width="6" height="10" viewBox="0 0 6 10"><path d="M5 1L1 5l4 4" fill="none" stroke="#5f6368" stroke-width="1.1"/></svg>
<div class="a" style="left:1026.5px;top:616px;font-size:8px;line-height:10px;color:#3c4043;font-weight:bold;letter-spacing:-0.1px">1 / 1</div>
<svg class="a" style="left:1047.5px;top:616px" width="6" height="10" viewBox="0 0 6 10"><path d="M1 1l4 4-4 4" fill="none" stroke="#5f6368" stroke-width="1.1"/></svg>
<div class="a card" style="left:761px;top:647.5px;width:305px;height:200px"><div class="hdr" style="height:29.5px"></div></div>
<svg class="a" style="left:770.5px;top:657.3px" width="12" height="10" viewBox="0 0 12 10"><path d="M1.3 8.4V1h10" fill="none" stroke="#202124" stroke-width="1.3"/><path d="M0.3 8.5h5.2" stroke="#202124" stroke-width="1.4"/><rect x="7.3" y="3" width="3.9" height="5.9" rx="0.7" fill="none" stroke="#202124" stroke-width="1.3"/></svg>
<div class="a ht" style="left:788px;top:657px">设备</div>
<svg class="a" style="left:1043.5px;top:657px" width="4" height="11" viewBox="0 0 4 11"><circle cx="2" cy="1.6" r="1.25" fill="#3c4043"/><circle cx="2" cy="5.5" r="1.25" fill="#3c4043"/><circle cx="2" cy="9.4" r="1.25" fill="#3c4043"/></svg>
<div class="a tt2" style="left:770.5px;top:688px">各类设备的广告效果细分数据</div>
<div class="a" style="left:773.5px;top:713px;width:9px;height:13px;border:1.4px solid #4285f4;border-radius:1.5px"></div>
<div class="a g" style="left:790.5px;top:715.5px;font-size:8px;line-height:10px">手机</div>
<div class="a" style="left:817.5px;top:714.5px;width:13.5px;height:11px;border:1.4px solid #d93025;border-radius:1.5px"></div>
<div class="a g" style="left:837px;top:715.5px;font-size:8px;line-height:10px">平板电脑</div>
<svg class="a" style="left:879px;top:714.5px" width="15" height="11" viewBox="0 0 15 11"><rect x="2" y="0.8" width="11" height="8" fill="none" stroke="#f4b400" stroke-width="1.4"/><rect x="0" y="9.3" width="15" height="1.5" fill="#f4b400"/></svg>
<div class="a g" style="left:899.5px;top:715.5px;font-size:8px;line-height:10px">计算机</div>
<div class="a" style="left:771px;top:744.5px;width:97.5px;height:15px;background:#4285f4"></div>
<div class="a" style="left:868.5px;top:744.5px;width:3.5px;height:15px;background:#d93025"></div>
<div class="a" style="left:872px;top:744.5px;width:117.5px;height:15px;background:#f4b400"></div>
<div class="a" style="left:771px;top:765px;width:5px;height:5px;background:#4285f4"></div><div class="a g" style="left:780.5px;top:762.5px;font-size:7.7px;line-height:10px">45.5%</div>
<div class="a" style="left:866px;top:765px;width:5px;height:5px;background:#d93025"></div><div class="a g" style="left:876px;top:762.5px;font-size:7.7px;line-height:10px">0.6%</div>
<div class="a" style="left:957.5px;top:765px;width:5px;height:5px;background:#f4b400"></div><div class="a g" style="left:967.5px;top:762.5px;font-size:7.7px;line-height:10px">53.9%</div>
<div class="a g" style="left:1002px;top:746px;font-size:7.5px;line-height:9px">费用</div><svg class="a" style="left:1019px;top:749.5px" width="6" height="3.5" viewBox="0 0 6 3.5"><path d="M0 0h6L3 3.5z" fill="#3c4043"/></svg>
<div class="a" style="left:1002px;top:756px;width:26px;height:1px;background:#dadce0"></div>
<div class="a" style="left:771px;top:779.5px;width:131px;height:15px;background:#4285f4"></div>
<div class="a" style="left:902px;top:779.5px;width:4px;height:15px;background:#d93025"></div>
<div class="a" style="left:906px;top:779.5px;width:83.5px;height:15px;background:#f4b400"></div>
<div class="a g" style="left:1002px;top:783px;font-size:7.5px;line-height:9px">展示次数</div><svg class="a" style="left:1034.5px;top:786.5px" width="6" height="3.5" viewBox="0 0 6 3.5"><path d="M0 0h6L3 3.5z" fill="#3c4043"/></svg>
<div class="a card" style="left:1076px;top:427px;width:305px;height:238px"><div class="hdr" style="height:29.5px"></div></div>
<svg class="a" style="left:1084px;top:434px" width="16" height="16" viewBox="0 0 16 16"><path d="M9.2 3.97A5 5 0 1 0 11.7 8.3" fill="none" stroke="#202124" stroke-width="1.3"/><path d="M6.5 6v2.5l2 2" fill="none" stroke="#202124" stroke-width="1.2"/><path d="M8.3 1.6A7 7 0 0 1 13.4 6.6" fill="none" stroke="#202124" stroke-width="1.2"/><path d="M9.6 3.6A4.6 4.6 0 0 1 11.6 6" fill="none" stroke="#202124" stroke-width="0"/></svg>
<div class="a ht" style="left:1103px;top:436.5px">周几和时段</div>
<div class="a g" style="left:1300.5px;top:436px;font-size:7.5px;line-height:9px">展示次数</div><svg class="a" style="left:1335px;top:439.5px" width="6" height="3.5" viewBox="0 0 6 3.5"><path d="M0 0h6L3 3.5z" fill="#5f6368"/></svg>
<div class="a" style="left:1300.5px;top:446.5px;width:41px;height:1px;background:#dadce0"></div>
<svg class="a" style="left:1358.5px;top:436.5px" width="4" height="11" viewBox="0 0 4 11"><circle cx="2" cy="1.6" r="1.25" fill="#3c4043"/><circle cx="2" cy="5.5" r="1.25" fill="#3c4043"/><circle cx="2" cy="9.4" r="1.25" fill="#3c4043"/></svg>
<div class="a tt2" style="left:1085.5px;top:468px">按照周几及具体时段细分的效果</div>
<div class="a tab" style="left:1121.5px;top:499.5px">天</div>
<div class="a tab" style="left:1205.5px;top:499.5px;color:#1a73e8">周几和时段</div>
<div class="a tab" style="left:1320.5px;top:499.5px">时段</div>
<div class="a" style="left:1177px;top:517.5px;width:102px;height:2px;background:#1a73e8"></div>
<svg class="a" style="left:0;top:0" width="1599" height="794" viewBox="0 0 1599 794"><rect x="1095.6" y="529.7" width="9.7" height="9.7" fill="#ebf2fd"/>
<rect x="1106.8" y="529.7" width="9.7" height="9.7" fill="#ebf2fd"/>
<rect x="1117.9" y="529.7" width="9.7" height="9.7" fill="#e2ebfb"/>
<rect x="1129.1" y="529.7" width="9.7" height="9.7" fill="#d8e4fa"/>
<rect x="1140.3" y="529.7" width="9.7" height="9.7" fill="#ceddf9"/>
<rect x="1151.4" y="529.7" width="9.7" height="9.7" fill="#bad0f7"/>
<rect x="1162.6" y="529.7" width="9.7" height="9.7" fill="#bad0f7"/>
<rect x="1173.8" y="529.7" width="9.7" height="9.7" fill="#c4d6f8"/>
<rect x="1185.0" y="529.7" width="9.7" height="9.7" fill="#b1c9f5"/>
<rect x="1196.1" y="529.7" width="9.7" height="9.7" fill="#a7c2f4"/>
<rect x="1207.3" y="529.7" width="9.7" height="9.7" fill="#d8e4fa"/>
<rect x="1218.5" y="529.7" width="9.7" height="9.7" fill="#eff4fd"/>
<rect x="1229.6" y="529.7" width="9.7" height="9.7" fill="#ebf2fd"/>
<rect x="1240.8" y="529.7" width="9.7" height="9.7" fill="#ebf2fd"/>
<rect x="1252.0" y="529.7" width="9.7" height="9.7" fill="#d8e4fa"/>
<rect x="1263.1" y="529.7" width="9.7" height="9.7" fill="#c4d6f8"/>
<rect x="1274.3" y="529.7" width="9.7" height="9.7" fill="#d8e4fa"/>
<rect x="1285.5" y="529.7" width="9.7" height="9.7" fill="#e2ebfb"/>
<rect x="1296.7" y="529.7" width="9.7" height="9.7" fill="#eff4fd"/>
<rect x="1341.3" y="529.7" width="9.7" height="9.7" fill="#f9fbfe"/>
<rect x="1095.6" y="540.9" width="9.7" height="9.7" fill="#f9fbfe"/>
<rect x="1117.9" y="540.9" width="9.7" height="9.7" fill="#f9fbfe"/>
<rect x="1129.1" y="540.9" width="9.7" height="9.7" fill="#f9fbfe"/>
<rect x="1140.3" y="540.9" width="9.7" height="9.7" fill="#f3f7fe"/>
<rect x="1196.1" y="540.9" width="9.7" height="9.7" fill="#f5f8fe"/>
<rect x="1207.3" y="540.9" width="9.7" height="9.7" fill="#e2ebfb"/>
<rect x="1218.5" y="540.9" width="9.7" height="9.7" fill="#f3f7fe"/>
<rect x="1229.6" y="540.9" width="9.7" height="9.7" fill="#f5f8fe"/>
<rect x="1240.8" y="540.9" width="9.7" height="9.7" fill="#f5f8fe"/>
<rect x="1252.0" y="540.9" width="9.7" height="9.7" fill="#eff4fd"/>
<rect x="1263.1" y="540.9" width="9.7" height="9.7" fill="#ebf2fd"/>
<rect x="1274.3" y="540.9" width="9.7" height="9.7" fill="#e7effc"/>
<rect x="1285.5" y="540.9" width="9.7" height="9.7" fill="#e7effc"/>
<rect x="1296.7" y="540.9" width="9.7" height="9.7" fill="#ebf2fd"/>
<rect x="1307.8" y="540.9" width="9.7" height="9.7" fill="#eff4fd"/>
<rect x="1319.0" y="540.9" width="9.7" height="9.7" fill="#f9fbfe"/>
<rect x="1106.8" y="552.1" width="9.7" height="9.7" fill="#f9fbfe"/>
<rect x="1117.9" y="552.1" width="9.7" height="9.7" fill="#f9fbfe"/>
<rect x="1129.1" y="552.1" width="9.7" height="9.7" fill="#f9fbfe"/>
<rect x="1140.3" y="552.1" width="9.7" height="9.7" fill="#f5f8fe"/>
<rect x="1151.4" y="552.1" width="9.7" height="9.7" fill="#f3f7fe"/>
<rect x="1162.6" y="552.1" width="9.7" height="9.7" fill="#f9fbfe"/>
<rect x="1173.8" y="552.1" width="9.7" height="9.7" fill="#f9fbfe"/>
<rect x="1185.0" y="552.1" width="9.7" height="9.7" fill="#f9fbfe"/>
<rect x="1196.1" y="552.1" width="9.7" height="9.7" fill="#f5f8fe"/>
<rect x="1207.3" y="552.1" width="9.7" height="9.7" fill="#f9fbfe"/>
<rect x="1218.5" y="552.1" width="9.7" height="9.7" fill="#f3f7fe"/>
<rect x="1229.6" y="552.1" width="9.7" height="9.7" fill="#d8e4fa"/>
<rect x="1240.8" y="552.1" width="9.7" height="9.7" fill="#f5f8fe"/>
<rect x="1252.0" y="552.1" width="9.7" height="9.7" fill="#ebf2fd"/>
<rect x="1263.1" y="552.1" width="9.7" height="9.7" fill="#93b5f2"/>
<rect x="1274.3" y="552.1" width="9.7" height="9.7" fill="#b1c9f5"/>
<rect x="1285.5" y="552.1" width="9.7" height="9.7" fill="#a7c2f4"/>
<rect x="1296.7" y="552.1" width="9.7" height="9.7" fill="#3b78e7"/>
<rect x="1307.8" y="552.1" width="9.7" height="9.7" fill="#bad0f7"/>
<rect x="1319.0" y="552.1" width="9.7" height="9.7" fill="#ceddf9"/>
<rect x="1330.2" y="552.1" width="9.7" height="9.7" fill="#f5f8fe"/>
<rect x="1341.3" y="552.1" width="9.7" height="9.7" fill="#f9fbfe"/>
<rect x="1095.6" y="563.3" width="9.7" height="9.7" fill="#c4d6f8"/>
<rect x="1106.8" y="563.3" width="9.7" height="9.7" fill="#e2ebfb"/>
<rect x="1117.9" y="563.3" width="9.7" height="9.7" fill="#e2ebfb"/>
<rect x="1129.1" y="563.3" width="9.7" height="9.7" fill="#e2ebfb"/>
<rect x="1140.3" y="563.3" width="9.7" height="9.7" fill="#ceddf9"/>
<rect x="1151.4" y="563.3" width="9.7" height="9.7" fill="#e2ebfb"/>
<rect x="1162.6" y="563.3" width="9.7" height="9.7" fill="#e2ebfb"/>
<rect x="1173.8" y="563.3" width="9.7" height="9.7" fill="#e2ebfb"/>
<rect x="1185.0" y="563.3" width="9.7" height="9.7" fill="#d8e4fa"/>
<rect x="1196.1" y="563.3" width="9.7" height="9.7" fill="#e2ebfb"/>
<rect x="1207.3" y="563.3" width="9.7" height="9.7" fill="#e2ebfb"/>
<rect x="1218.5" y="563.3" width="9.7" height="9.7" fill="#b1c9f5"/>
<rect x="1229.6" y="563.3" width="9.7" height="9.7" fill="#93b5f2"/>
<rect x="1240.8" y="563.3" width="9.7" height="9.7" fill="#bad0f7"/>
<rect x="1252.0" y="563.3" width="9.7" height="9.7" fill="#fbfcff"/>
<rect x="1263.1" y="563.3" width="9.7" height="9.7" fill="#f5f8fe"/>
<rect x="1274.3" y="563.3" width="9.7" height="9.7" fill="#dce7fb"/>
<rect x="1285.5" y="563.3" width="9.7" height="9.7" fill="#e2ebfb"/>
<rect x="1296.7" y="563.3" width="9.7" height="9.7" fill="#eff4fd"/>
<rect x="1307.8" y="563.3" width="9.7" height="9.7" fill="#f9fbfe"/>
<rect x="1330.2" y="563.3" width="9.7" height="9.7" fill="#f9fbfe"/>
<rect x="1341.3" y="563.3" width="9.7" height="9.7" fill="#f5f8fe"/>
<rect x="1095.6" y="574.5" width="9.7" height="9.7" fill="#e2ebfb"/>
<rect x="1106.8" y="574.5" width="9.7" height="9.7" fill="#d8e4fa"/>
<rect x="1117.9" y="574.5" width="9.7" height="9.7" fill="#eff4fd"/>
<rect x="1129.1" y="574.5" width="9.7" height="9.7" fill="#ebf2fd"/>
<rect x="1140.3" y="574.5" width="9.7" height="9.7" fill="#e7effc"/>
<rect x="1151.4" y="574.5" width="9.7" height="9.7" fill="#dce7fb"/>
<rect x="1162.6" y="574.5" width="9.7" height="9.7" fill="#ceddf9"/>
<rect x="1173.8" y="574.5" width="9.7" height="9.7" fill="#d8e4fa"/>
<rect x="1185.0" y="574.5" width="9.7" height="9.7" fill="#c4d6f8"/>
<rect x="1196.1" y="574.5" width="9.7" height="9.7" fill="#bad0f7"/>
<rect x="1207.3" y="574.5" width="9.7" height="9.7" fill="#b5ccf6"/>
<rect x="1218.5" y="574.5" width="9.7" height="9.7" fill="#89aef1"/>
<rect x="1229.6" y="574.5" width="9.7" height="9.7" fill="#bad0f7"/>
<rect x="1240.8" y="574.5" width="9.7" height="9.7" fill="#c4d6f8"/>
<rect x="1252.0" y="574.5" width="9.7" height="9.7" fill="#ceddf9"/>
<rect x="1263.1" y="574.5" width="9.7" height="9.7" fill="#d8e4fa"/>
<rect x="1274.3" y="574.5" width="9.7" height="9.7" fill="#e7effc"/>
<rect x="1285.5" y="574.5" width="9.7" height="9.7" fill="#ebf2fd"/>
<rect x="1296.7" y="574.5" width="9.7" height="9.7" fill="#bad0f7"/>
<rect x="1307.8" y="574.5" width="9.7" height="9.7" fill="#ceddf9"/>
<rect x="1319.0" y="574.5" width="9.7" height="9.7" fill="#ebf2fd"/>
<rect x="1330.2" y="574.5" width="9.7" height="9.7" fill="#ebf2fd"/>
<rect x="1341.3" y="574.5" width="9.7" height="9.7" fill="#f5f8fe"/>
<rect x="1352.5" y="574.5" width="9.7" height="9.7" fill="#f9fbfe"/>
<rect x="1095.6" y="585.7" width="9.7" height="9.7" fill="#d8e4fa"/>
<rect x="1106.8" y="585.7" width="9.7" height="9.7" fill="#ceddf9"/>
<rect x="1117.9" y="585.7" width="9.7" height="9.7" fill="#ebf2fd"/>
<rect x="1129.1" y="585.7" width="9.7" height="9.7" fill="#e7effc"/>
<rect x="1140.3" y="585.7" width="9.7" height="9.7" fill="#ebf2fd"/>
<rect x="1151.4" y="585.7" width="9.7" height="9.7" fill="#d8e4fa"/>
<rect x="1162.6" y="585.7" width="9.7" height="9.7" fill="#ceddf9"/>
<rect x="1173.8" y="585.7" width="9.7" height="9.7" fill="#c4d6f8"/>
<rect x="1185.0" y="585.7" width="9.7" height="9.7" fill="#b5ccf6"/>
<rect x="1196.1" y="585.7" width="9.7" height="9.7" fill="#89aef1"/>
<rect x="1207.3" y="585.7" width="9.7" height="9.7" fill="#9dbcf3"/>
<rect x="1218.5" y="585.7" width="9.7" height="9.7" fill="#b1c9f5"/>
<rect x="1229.6" y="585.7" width="9.7" height="9.7" fill="#9dbcf3"/>
<rect x="1240.8" y="585.7" width="9.7" height="9.7" fill="#c4d6f8"/>
<rect x="1252.0" y="585.7" width="9.7" height="9.7" fill="#c4d6f8"/>
<rect x="1263.1" y="585.7" width="9.7" height="9.7" fill="#ceddf9"/>
<rect x="1274.3" y="585.7" width="9.7" height="9.7" fill="#ceddf9"/>
<rect x="1285.5" y="585.7" width="9.7" height="9.7" fill="#b1c9f5"/>
<rect x="1296.7" y="585.7" width="9.7" height="9.7" fill="#bad0f7"/>
<rect x="1307.8" y="585.7" width="9.7" height="9.7" fill="#e2ebfb"/>
<rect x="1319.0" y="585.7" width="9.7" height="9.7" fill="#89aef1"/>
<rect x="1330.2" y="585.7" width="9.7" height="9.7" fill="#80a7ef"/>
<rect x="1341.3" y="585.7" width="9.7" height="9.7" fill="#89aef1"/>
<rect x="1352.5" y="585.7" width="9.7" height="9.7" fill="#ebf2fd"/>
<rect x="1095.6" y="596.9" width="9.7" height="9.7" fill="#ebf2fd"/>
<rect x="1106.8" y="596.9" width="9.7" height="9.7" fill="#f3f7fe"/>
<rect x="1117.9" y="596.9" width="9.7" height="9.7" fill="#f5f8fe"/>
<rect x="1129.1" y="596.9" width="9.7" height="9.7" fill="#ebf2fd"/>
<rect x="1140.3" y="596.9" width="9.7" height="9.7" fill="#e7effc"/>
<rect x="1151.4" y="596.9" width="9.7" height="9.7" fill="#d8e4fa"/>
<rect x="1162.6" y="596.9" width="9.7" height="9.7" fill="#c4d6f8"/>
<rect x="1173.8" y="596.9" width="9.7" height="9.7" fill="#d8e4fa"/>
<rect x="1185.0" y="596.9" width="9.7" height="9.7" fill="#c4d6f8"/>
<rect x="1196.1" y="596.9" width="9.7" height="9.7" fill="#c4d6f8"/>
<rect x="1207.3" y="596.9" width="9.7" height="9.7" fill="#ceddf9"/>
<rect x="1218.5" y="596.9" width="9.7" height="9.7" fill="#e2ebfb"/>
<rect x="1229.6" y="596.9" width="9.7" height="9.7" fill="#9dbcf3"/>
<rect x="1240.8" y="596.9" width="9.7" height="9.7" fill="#e2ebfb"/>
<rect x="1252.0" y="596.9" width="9.7" height="9.7" fill="#bad0f7"/>
<rect x="1263.1" y="596.9" width="9.7" height="9.7" fill="#9dbcf3"/>
<rect x="1274.3" y="596.9" width="9.7" height="9.7" fill="#a7c2f4"/>
<rect x="1285.5" y="596.9" width="9.7" height="9.7" fill="#c4d6f8"/>
<rect x="1296.7" y="596.9" width="9.7" height="9.7" fill="#bad0f7"/>
<rect x="1307.8" y="596.9" width="9.7" height="9.7" fill="#93b5f2"/>
<rect x="1319.0" y="596.9" width="9.7" height="9.7" fill="#e2ebfb"/>
<rect x="1330.2" y="596.9" width="9.7" height="9.7" fill="#e2ebfb"/>
<rect x="1341.3" y="596.9" width="9.7" height="9.7" fill="#eff4fd"/>
<rect x="1352.5" y="596.9" width="9.7" height="9.7" fill="#eff4fd"/><path d="M1094.5 528v80.5h269M1095 608v3M1162 608v3M1229 608v3M1296 608v3M1363 608v3" fill="none" stroke="#bdc1c6" stroke-width="1"/></svg>
<div class="a g" style="left:1082.5px;top:530.8px;font-size:8px;line-height:9px">日</div>
<div class="a g" style="left:1082.5px;top:542.7px;font-size:8px;line-height:9px">一</div>
<div class="a g" style="left:1082.5px;top:554.5px;font-size:8px;line-height:9px">二</div>
<div class="a g" style="left:1082.5px;top:566.4px;font-size:8px;line-height:9px">三</div>
<div class="a g" style="left:1082.5px;top:578.3px;font-size:8px;line-height:9px">四</div>
<div class="a g" style="left:1082.5px;top:590.1px;font-size:8px;line-height:9px">五</div>
<div class="a g" style="left:1082.5px;top:602.0px;font-size:8px;line-height:9px">六</div>
<div class="a g" style="left:1094.3px;top:612.5px;font-size:7.7px;line-height:9px">0时</div>
<div class="a g" style="left:1155.7px;top:612.5px;font-size:7.7px;line-height:9px">6时</div>
<div class="a g" style="left:1218.7px;top:612.5px;font-size:7.7px;line-height:9px">12时</div>
<div class="a g" style="left:1285px;top:612.5px;font-size:7.7px;line-height:9px">18时</div>
<div class="a g" style="left:1351.3px;top:612.5px;font-size:7.7px;line-height:9px">0时</div>
<div class="a lk" style="left:1085.5px;top:645px;font-weight:normal">广告投放时间</div>
<div class="a card" style="left:1076px;top:676px;width:305px;height:200px"><div class="hdr" style="height:29.5px"></div></div>
<svg class="a" style="left:1086.5px;top:684.5px" width="10" height="12" viewBox="0 0 10 12"><path d="M5 1a3.8 3.8 0 0 0-2.3 6.8V9h4.6V7.8A3.8 3.8 0 0 0 5 1z" fill="none" stroke="#3c4043" stroke-width="1.3"/><rect x="3" y="10.2" width="4" height="1.3" fill="#3c4043"/></svg>
<div class="a ht" style="left:1103px;top:685.5px">建议</div>
<svg class="a" style="left:1358.5px;top:685px" width="4" height="11" viewBox="0 0 4 11"><circle cx="2" cy="1.6" r="1.25" fill="#3c4043"/><circle cx="2" cy="5.5" r="1.25" fill="#3c4043"/><circle cx="2" cy="9.4" r="1.25" fill="#3c4043"/></svg>
<svg class="a" style="left:1085px;top:714.5px" width="15" height="15" viewBox="0 0 15 15"><circle cx="7.5" cy="7.5" r="7.5" fill="#e8f0fe"/><rect x="4" y="4" width="7.6" height="7.6" rx="1" fill="none" stroke="#1a73e8" stroke-width="1.1"/><rect x="3.5" y="3.5" width="8.6" height="2.2" rx="0.8" fill="#1a73e8"/><rect x="5.3" y="7" width="2.8" height="2.4" fill="#4a8ef0"/><path d="M11.2 8.6L12.6 10.6 11.2 12.6 9.8 10.6z" fill="#1a73e8" stroke="#fff" stroke-width="0.7"/></svg>
<div class="a g" style="left:1108px;top:718px;font-size:8px;letter-spacing:-0.28px;line-height:10px">提升您的自适应搜索广告的效果</div>
<div class="a tt" style="left:1085px;top:741.2px">通过改善标题和广告内容描述来增加自适应搜索广告的点击次数</div>
<div class="a g" style="left:1085px;top:758.5px;font-size:8px;letter-spacing:-0.33px;line-height:10px">推荐原因：您的某些自适应搜索广告的广告效力低于“良好”水平</div>
<svg class="a" style="left:1301.3px;top:757.3px" width="10.4" height="10.4" viewBox="0 0 24 24"><path fill="#5f6368" d="M11 18h2v-2h-2v2zm1-16C6.48 2 2 6.48 2 12s4.48 10 10 10 10-4.48 10-10S17.52 2 12 2zm0 18c-4.41 0-8-3.59-8-8s3.59-8 8-8 8 3.59 8 8-3.59 8-8 8zm0-14c-2.21 0-4 1.79-4 4h2c0-1.1.9-2 2-2s2 .9 2 2c0 2-3 1.75-3 5h2c0-2.25 3-2.5 3-5 0-2.21-1.79-4-4-4z"/></svg>
<div class="a lk" style="left:1085px;top:782px">查看</div>
<div class="a" style="left:1456.8px;top:762.9px;width:101.5px;height:23.1px;background:#1a73e8;border-radius:2.5px;box-shadow:0 1px 2px rgba(0,0,0,.25)"></div>
<div class="a" style="left:1559.1px;top:762.9px;width:29.8px;height:21.8px;background:#1a73e8;border-radius:2.5px;box-shadow:0 1px 2px rgba(0,0,0,.25)"></div>
<svg class="a" style="left:1464.5px;top:770.5px" width="11" height="9" viewBox="0 0 11 9"><path d="M1.5 8.2V5.2a4 4 0 0 1 8 0v3" fill="none" stroke="#fff" stroke-width="1.6"/><rect x="0.6" y="5" width="2" height="3.4" rx="0.8" fill="#fff"/><rect x="8.4" y="5" width="2" height="3.4" rx="0.8" fill="#fff"/><path d="M4 4.5h2.6l-1.3 2.2" fill="none" stroke="#fff" stroke-width="1"/></svg>
<div class="a" style="left:1480px;top:770px;font-size:8.5px;line-height:10px;color:#fff;font-weight:bold">预约专家咨询服务</div>
<svg class="a" style="left:1569px;top:769.3px" width="10" height="10" viewBox="0 0 10 10"><path d="M1 1l8 8M9 1L1 9" stroke="#fff" stroke-width="1.6"/></svg>
<!--ENDCARDS-->


<script>
(function(){
 var t=document.createElement('span');
 t.style.cssText='position:absolute;left:-9999px;top:0;font-size:100px;line-height:1;white-space:nowrap;font-family:"Liberation Sans",sans-serif';
 t.textContent='\u6982\u89c8\u5efa\u8bae\u5e7f\u544a';
 document.body.appendChild(t);
 var w=t.getBoundingClientRect().width;
 document.body.removeChild(t);
 if(!(w>0) || w>560) return;
 var r=w/600;
 var re=/[\u2e80-\u9fff\uf900-\ufaff\ufe30-\ufe4f\uff00-\uffef]+/g;
 var walker=document.createTreeWalker(document.body,NodeFilter.SHOW_TEXT,null);
 var nodes=[],n;
 while((n=walker.nextNode())){ if(n.parentNode && n.parentNode.tagName!=='SCRIPT' && n.parentNode.tagName!=='STYLE' && re.test(n.nodeValue)) nodes.push(n); re.lastIndex=0; }
 nodes.forEach(function(node){
  var p=node.parentNode, cs=getComputedStyle(p), fs=parseFloat(cs.fontSize)||10;
  var ls=parseFloat(cs.letterSpacing); if(isNaN(ls)) ls=0;
  var add=(Math.round(fs)*(1-r))+ls;
  var s=node.nodeValue, frag=document.createDocumentFragment(), last=0, m;
  re.lastIndex=0;
  while((m=re.exec(s))){
   if(m.index>last) frag.appendChild(document.createTextNode(s.slice(last,m.index)));
   var sp=document.createElement('span'); sp.style.letterSpacing=add+'px'; sp.textContent=m[0]; frag.appendChild(sp);
   last=m.index+m[0].length;
  }
  if(last<s.length) frag.appendChild(document.createTextNode(s.slice(last)));
  p.replaceChild(frag,node);
 });
})();
</script>
</body></html>
